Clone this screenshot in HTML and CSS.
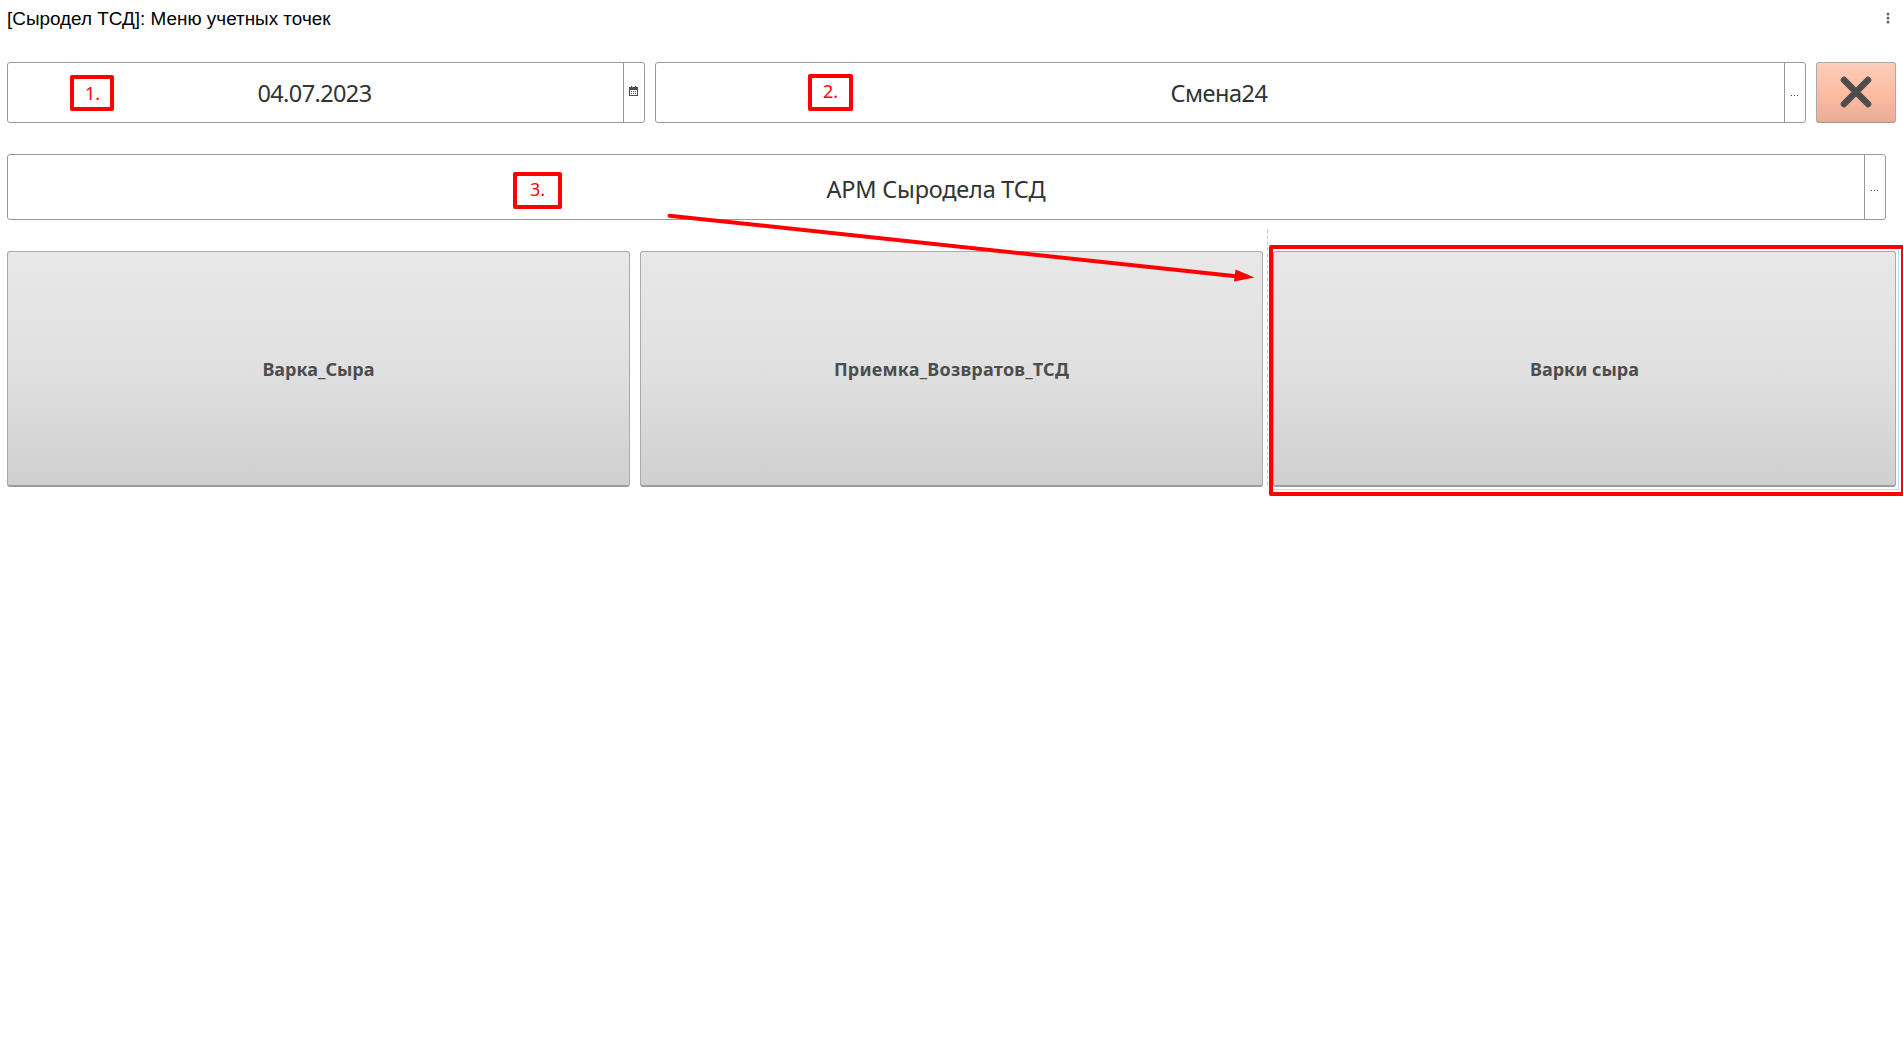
FILE: index.html
```html
<!DOCTYPE html>
<html lang="ru">
<head>
<meta charset="utf-8">
<title>Меню учетных точек</title>
<link rel="stylesheet" href="styles.css">
</head>
<body>
<header class="titlebar">
  <h1 class="title">[Сыродел ТСД]: Меню учетных точек</h1>
  <svg class="more" width="4" height="12" viewBox="0 0 4 12"><g fill="#666"><circle cx="2" cy="1.9" r="1.5"/><circle cx="2" cy="5.9" r="1.5"/><circle cx="2" cy="9.9" r="1.5"/></g></svg>
</header>
<main class="form">
  <div class="row">
    <div class="field field-date">
      <span class="value"><span class="t-date">04.07.2023</span></span>
      <span class="picker"><svg class="calendar" width="9" height="10" viewBox="0 0 9 10" shape-rendering="crispEdges"><path fill="#4d4d4d" fill-rule="evenodd" d="M0 1h2V0h1v1h3V0h1v1h2v9H0zM1 4v5h7V4z"/><path fill="#4d4d4d" d="M2 5h1v1H2zM4 5h1v1H4zM6 5h1v1H6zM2 7h1v1H2zM4 7h1v1H4zM6 7h1v1H6z"/></svg></span>
    </div>
    <div class="field field-shift">
      <span class="value"><span class="t-shift">Смена24</span></span>
      <span class="picker"><i class="dots"></i></span>
    </div>
    <button class="close" aria-label="Закрыть"><svg width="34" height="34" viewBox="0 0 34 34"><path d="M5 5 29 29M29 5 5 29" stroke="#4d4d4d" stroke-width="6.6" stroke-linecap="round"/></svg></button>
  </div>
  <div class="field field-place">
    <span class="value"><span class="t-place">АРМ Сыродела ТСД</span></span>
    <span class="picker"><i class="dots"></i></span>
  </div>
  <div class="tiles">
    <button class="tile"><span class="t-b1">Варка_Сыра</span></button>
    <button class="tile"><span class="t-b2">Приемка_Возвратов_ТСД</span></button>
    <button class="tile"><span class="t-b3">Варки сыра</span></button>
  </div>
</main>
<div class="guide"></div>
<div class="selection"></div>
<div class="mark mark-1"><span>1.</span></div>
<div class="mark mark-2"><span>2.</span></div>
<div class="mark mark-3"><span>3.</span></div>
<div class="mark highlight"></div>
<svg class="arrow" width="600" height="80" viewBox="660 205 600 80"><path d="M669.5 215.700 1236 276.300" stroke="#f00" stroke-width="4" stroke-linecap="round"/><path d="M1235.5 269.5 1254.500 277.500 1234 281.500z" fill="#f00"/></svg>
</body>
</html>
```
FILE: styles.css
```css
* { box-sizing: border-box; }
body {
  margin: 0;
  height: 1042px;
  position: relative;
  overflow: hidden;
  background: #fff;
  color: #333;
  font-family: "Noto Sans", "Open Sans", sans-serif;
}
.titlebar {
  display: flex;
  justify-content: space-between;
  align-items: flex-start;
  height: 62px;
  padding: 8px 13px 0 7px;
}
.title {
  margin: 0;
  font: 400 18.9px/22px "Liberation Sans", Arial, sans-serif;
  color: #000;
  white-space: nowrap;
}
.more { margin-top: 4px; }
.form { padding: 0 7px; }
.row { display: flex; gap: 10px; height: 61px; }
.field {
  display: flex;
  border: 1px solid #999;
  border-radius: 3px;
  background: #fff;
  font-size: 23.5px;
  white-space: nowrap;
}
.field-date { width: 638px; }
.field-shift { width: 1151px; }
.field-place { width: 1879px; height: 66px; margin-top: 31px; }
.value { flex: 1; display: flex; align-items: center; justify-content: center; }
.t-date { letter-spacing: -.6px; padding-right: 2px; }
.t-shift { letter-spacing: -.5px; padding-right: 2px; }
.t-place { letter-spacing: -.22px; padding-top: 3px; }
.t-b2 { letter-spacing: .22px; }
.picker {
  width: 21px;
  border-left: 1px solid #999;
  display: flex;
  align-items: center;
  justify-content: center;
}
.calendar { margin: 0 1px 3px 0; }
.dots {
  width: 7px;
  height: 1px;
  margin: 6px 2px 0 0;
  background: repeating-linear-gradient(90deg, #444 0 1px, transparent 1px 3px);
}
.close {
  width: 80px;
  height: 61px;
  padding: 0 0 1px;
  border: 1px solid #aaa;
  border-bottom-color: #999;
  border-radius: 3px;
  background: linear-gradient(#fdcdb8, #fdbda3 50%, #e8ac95);
  display: flex;
  align-items: center;
  justify-content: center;
}
.tiles { display: flex; gap: 10px; margin-top: 31px; height: 236px; }
.tile {
  flex: 1;
  padding: 1px 0 0;
  border: 1px solid #aaa;
  border-bottom: 2px solid #9c9c9c;
  border-radius: 3px;
  background: linear-gradient(#e8e8e8, #e0e0e0 50%, #cfcfcf);
  color: #4d4d4d;
  font: 700 18px/24px "Noto Sans", "Open Sans", sans-serif;
  white-space: nowrap;
}
.guide {
  position: absolute;
  left: 1267px;
  top: 229px;
  width: 1px;
  height: 256px;
  background: repeating-linear-gradient(#ccc 0 4px, transparent 4px 6px);
}
.selection {
  position: absolute;
  left: 1270px;
  top: 247px;
  width: 629px;
  height: 243px;
  border: 1px solid #b9dcf8;
}
.mark {
  position: absolute;
  border: 4px solid #f00;
  border-radius: 2px;
  color: #f00;
  font-size: 18px;
  line-height: 24px;
}
.mark span { position: absolute; }
.mark-1 { left: 70px; top: 75px; width: 44px; height: 36px; }
.mark-2 { left: 808px; top: 74px; width: 45px; height: 37px; }
.mark-3 { left: 513px; top: 172px; width: 49px; height: 37px; }
.mark-1 span { left: 11px; top: 2px; }
.mark-2 span { left: 11px; top: 1px; }
.mark-3 span { left: 13px; top: 1px; }
.highlight { left: 1269px; top: 245px; width: 636px; height: 251px; }
.arrow { position: absolute; left: 660px; top: 205px; }
```
